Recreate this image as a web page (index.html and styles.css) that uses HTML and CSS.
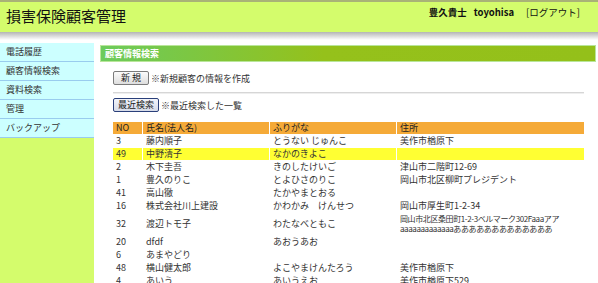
FILE: index.html
```html
<!DOCTYPE html>
<html lang="ja">
<head>
  <meta charset="UTF-8" />
  <title>損害保険顧客管理</title>
  <link rel="stylesheet" href="styles.css">
</head>
<body>
  <div class="header">
    <h1 class="title">損害保険顧客管理</h1>
    <div class="user">
      <span class="user-name">豊久貴士</span>
      <span class="user-id">toyohisa</span>
      <span class="logout">[ログアウト]</span>
    </div>
  </div>
  <div class="shade"></div>

  <div class="page">
    <!-- Side menu -->
    <div class="side">
      <div class="side-item">電話履歴</div>
      <div class="side-item">顧客情報検索</div>
      <div class="side-item">資料検索</div>
      <div class="side-item">管理</div>
      <div class="side-item">バックアップ</div>
      <div class="side-fill"></div>
    </div>

    <!-- Main -->
    <div class="main">
      <div class="main-title">顧客情報検索</div>
      <div class="content">
        <div class="action">
          <button class="btn btn-new">新 規</button>
          <span class="note">※新規顧客の情報を作成</span>
        </div>
        <div class="rule"></div>
        <div class="action">
          <button class="btn btn-focus">最近検索</button>
          <span class="note">※最近検索した一覧</span>
        </div>

        <table class="list">
          <colgroup>
            <col class="col-no">
            <col class="col-name">
            <col class="col-kana">
            <col>
          </colgroup>
          <tr>
            <th>NO</th><th>氏名(法人名)</th><th>ふりがな</th><th>住所</th>
          </tr>
          <tr><td>3</td><td>藤内順子</td><td>とうない じゅんこ</td><td>美作市楢原下</td></tr>
          <tr class="hit"><td>49</td><td>中野清子</td><td>なかのきよこ</td><td></td></tr>
          <tr><td>2</td><td>木下圭吾</td><td>きのしたけいご</td><td>津山市二階町12-69</td></tr>
          <tr><td>1</td><td>豊久のりこ</td><td>とよひさのりこ</td><td>岡山市北区柳町プレジデント</td></tr>
          <tr><td>41</td><td>高山徹</td><td>たかやまとおる</td><td></td></tr>
          <tr><td>16</td><td>株式会社川上建設</td><td>かわかみ　けんせつ</td><td>岡山市厚生町1-2-34</td></tr>
          <tr><td>32</td><td>渡辺トモ子</td><td>わたなべともこ</td><td class="multi">岡山市北区桑田町1-2-3ベルマーク302Faaaアア<br>aaaaaaaaaaaaaあああああああああああああ</td></tr>
          <tr><td>20</td><td>dfdf</td><td>あおうあお</td><td></td></tr>
          <tr><td>6</td><td>あまやどり</td><td></td><td></td></tr>
          <tr><td>48</td><td>横山健太郎</td><td>よこやまけんたろう</td><td>美作市楢原下</td></tr>
          <tr><td>4</td><td>あいう</td><td>あいうえお</td><td>美作市楢原下529</td></tr>
        </table>
      </div>
    </div>
  </div>
</body>
</html>
```

FILE: styles.css
```css
* {
  margin: 0;
  padding: 0;
  box-sizing: border-box;
}

html, body {
  height: 100%;
  overflow: hidden;
}

body {
  display: flex;
  flex-direction: column;
  font-family: "Noto Sans CJK JP", "DejaVu Sans", sans-serif;
  font-size: 9px;
  color: #333;
  background-color: #fff;
}

/* Header */
.header {
  display: flex;
  justify-content: space-between;
  align-items: flex-start;
  height: 32px;
  flex-shrink: 0;
  border-top: 2px solid #a9b277;
  background-color: #d4fc6c;
}

.title {
  font-size: 15px;
  font-weight: normal;
  line-height: 20px;
  color: #111;
  padding: 4px 0 0 6px;
}

.user {
  display: flex;
  padding: 4px 18px 0 0;
  font-size: 9.5px;
  line-height: 13px;
  color: #111;
}

.user-name,
.user-id {
  font-weight: bold;
}

.user-id {
  margin-left: 7px;
}

.logout {
  margin-left: 12px;
}

.shade {
  height: 8px;
  flex-shrink: 0;
  background: linear-gradient(#b4b4b4, #ffffff);
}

/* Page */
.page {
  display: flex;
  flex: 1;
  margin-top: 3px;
}

.side {
  display: flex;
  flex-direction: column;
  width: 94px;
  flex-shrink: 0;
}

.side-item {
  height: 19px;
  line-height: 18px;
  padding-left: 6px;
  background-color: #ccffff;
  border-bottom: 1px solid #99ccee;
  color: #333;
}

.side-fill {
  flex: 1;
  background-color: #d4fc6c;
}

.main {
  width: 496px;
  margin: 2px 0 0 6px;
}

.main-title {
  height: 17px;
  line-height: 15px;
  padding-left: 4px;
  border: 1px solid #b9e69a;
  background: linear-gradient(to right, #6ccb5c, #95c11b 45%, #94c01a);
  color: #fff;
  font-weight: bold;
}

.content {
  padding: 9px 12px 0 13px;
}

.action {
  display: flex;
  align-items: center;
}

.btn {
  height: 14px;
  padding: 0 4px;
  font-family: inherit;
  font-size: 9px;
  line-height: 12px;
  color: #222;
  border: 1px solid #7b7b7b;
  border-radius: 2px;
  background: linear-gradient(#fbfbfb, #dedede);
}

.btn-new {
  padding: 0 7px;
}

.btn-focus {
  padding: 0 4px;
  border-color: #2a3f7a;
  background: linear-gradient(#f2f4fa, #d6dbe8);
}

.note {
  margin-left: 2px;
}

.rule {
  height: 2px;
  margin: 7px 0 4px;
  background-color: #d6d6d6;
  border-bottom: 1px solid #eeeeee;
}

/* Table */
.list {
  width: calc(100% + 2px);
  margin: 9px -1px 0;
  border-collapse: separate;
  border-spacing: 1px;
  table-layout: fixed;
}

.col-no {
  width: 29px;
}

.col-name,
.col-kana {
  width: 126px;
}

.list th,
.list td {
  height: 12px;
  line-height: 12px;
  padding: 0 3px;
  text-align: left;
  font-weight: normal;
  white-space: nowrap;
  overflow: hidden;
}

.list th {
  background-color: #f5aa38;
  color: #222;
}

.list tr.hit td {
  background-color: #ffff33;
}

.list td.multi {
  font-size: 8px;
  letter-spacing: -0.4px;
  line-height: 10px;
  padding: 1px 3px;
}
```
